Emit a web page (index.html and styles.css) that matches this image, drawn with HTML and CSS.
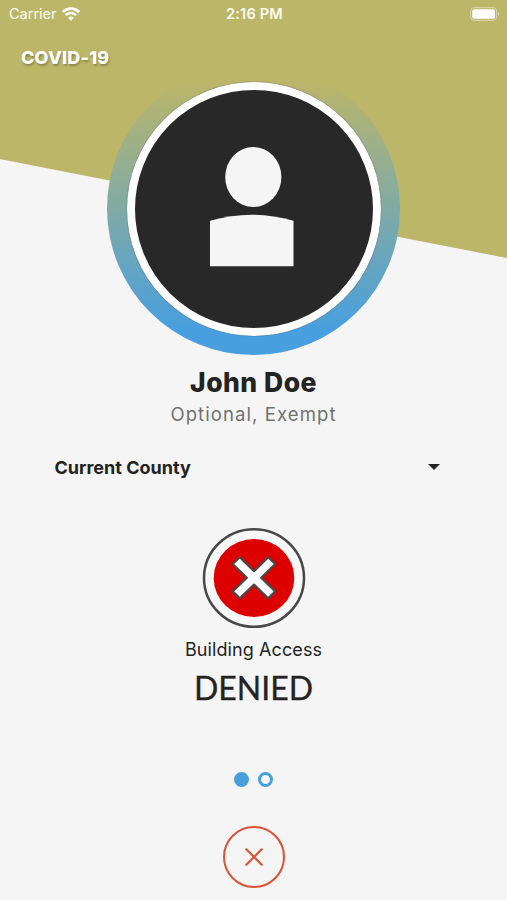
FILE: index.html
```html
<!DOCTYPE html>
<html lang="en">
  <head>
    <meta charset="UTF-8" />
    <meta name="viewport" content="width=device-width, initial-scale=1.0" />
    <title>COVID-19</title>
    <link rel="stylesheet" href="styles.css">
  </head>
  <body>
    <main class="screen">
      <div class="status-bar">
        <div class="carrier">
          <span>Carrier</span>
          <svg width="18" height="14" viewBox="0 0 18 14" fill="none" stroke="#fff" stroke-width="2.6">
            <path d="M0.8 5a11.6 11.6 0 0 1 16.4 0" />
            <path d="M3.7 8.2a7.5 7.5 0 0 1 10.6 0" />
            <path d="M9 13.8l-2.8-2.9a4 4 0 0 1 5.6 0z" fill="#fff" stroke="none" />
          </svg>
        </div>
        <span class="time">2:16 PM</span>
        <div class="battery">
          <svg width="30" height="14" viewBox="0 0 30 14">
            <rect x="0.6" y="0.6" width="26" height="12.8" rx="3.8" fill="none" stroke="#fff" stroke-opacity="0.4" stroke-width="1.1" />
            <rect x="2.2" y="2.2" width="22.8" height="9.6" rx="2.3" fill="#fff" />
            <path d="M28 4.8a2.6 2.6 0 0 1 0 4.4z" fill="#fff" fill-opacity="0.5" />
          </svg>
        </div>
      </div>
      <h1 class="title"><span>COVID-19</span></h1>

      <div class="avatar">
        <div class="photo">
          <svg width="86" height="122" viewBox="0 0 86 122" fill="#f5f5f5">
            <ellipse cx="44.3" cy="31" rx="28.1" ry="30" />
            <path d="M1 74.7Q43 62.7 84.5 74.7V120.3H1z" />
          </svg>
        </div>
      </div>

      <h2 class="name"><span>John Doe</span></h2>
      <p class="role"><span>Optional, Exempt</span></p>

      <div class="county">
        <span>Current County</span>
        <i class="caret"></i>
      </div>

      <svg class="denied-icon" width="104" height="102" viewBox="0 0 104 102">
        <ellipse cx="52" cy="51" rx="50" ry="48.8" fill="#f8f8f8" stroke="#484848" stroke-width="2.5" />
        <ellipse cx="52" cy="51" rx="40.3" ry="39" fill="#dc0000" />
        <path d="M37.8 30.3L52 44.2L66.2 30.3L73.3 37L59.2 50.7L73.3 64.4L66.2 71.4L52 57.6L37.8 71.4L30.7 64.4L44.8 50.7L30.7 37z" fill="#fff" stroke="#484848" stroke-width="2.2" stroke-linejoin="round" />
      </svg>
      <p class="access"><span>Building Access</span></p>
      <p class="result"><span>DENIED</span></p>

      <div class="dots">
        <span class="dot active"></span>
        <span class="dot"></span>
      </div>

      <button class="close" aria-label="Close">
        <svg width="18" height="18" viewBox="0 0 18 18" stroke="#dc5134" stroke-width="2.2" stroke-linecap="round">
          <path d="M1.3 1.3l15.4 15.4M16.7 1.3L1.3 16.7" />
        </svg>
      </button>
    </main>
  </body>
</html>
```
FILE: styles.css
```css
* {
  box-sizing: border-box;
}
body {
  margin: 0;
  background-color: #f5f5f5;
  font-family: Inter, sans-serif;
  color: #232323;
}
h1,
h2,
p {
  margin: 0;
}
.screen {
  display: flex;
  flex-direction: column;
  align-items: center;
  width: 507px;
  height: 900px;
  /* slanted header */
  background: linear-gradient(191.05deg, #bcb668 0 252.8px, #f5f5f5 253.8px);
}
.status-bar {
  display: grid;
  grid-template-columns: 1fr auto 1fr;
  align-items: center;
  width: 100%;
  height: 27px;
  padding: 0 7px 0 9px;
  font-size: 14.5px;
  color: #fffdf0;
}
.carrier {
  display: flex;
  align-items: center;
  gap: 5px;
}
.time {
  font-weight: 600;
  letter-spacing: 0.2px;
}
.battery {
  display: flex;
  justify-content: flex-end;
}
.title {
  width: 100%;
  height: 35px;
  padding-left: 21px;
  font-size: 18px;
  font-weight: 800;
  line-height: 61px;
  letter-spacing: 0.2px;
  color: #fff;
  text-shadow: 1px 2px 2px rgba(0, 0, 0, 0.25);
}
.avatar {
  display: flex;
  justify-content: center;
  flex-shrink: 0;
  width: 293px;
  height: 293px;
  padding-top: 19.5px;
  border-radius: 50%;
  background: linear-gradient(#bcb668 6%, #479fe0 92%);
}
.photo {
  display: flex;
  justify-content: center;
  width: 254px;
  height: 254px;
  padding: 56.5px 3px 0 0;
  border: 8px solid #fff;
  border-radius: 50%;
  background-color: #282828;
  box-shadow: 0 0 1px rgba(40, 40, 40, 0.9);
}
.name {
  margin-top: 9px;
  font-size: 26.5px;
  font-weight: 800;
  line-height: 36px;
  letter-spacing: 0.5px;
}
.role {
  font-size: 18.5px;
  line-height: 28px;
  letter-spacing: 1.1px;
  color: #707070;
}
.county {
  display: flex;
  justify-content: space-between;
  align-items: center;
  width: 398px;
  height: 30px;
  margin-top: 24px;
  padding-right: 13px;
  font-size: 18px;
  font-weight: 700;
}
.caret {
  border: 6px solid transparent;
  border-top-color: #232323;
  border-bottom: 0;
}
.denied-icon {
  flex-shrink: 0;
  margin-top: 45px;
}
.access {
  margin-top: 8px;
  font-size: 18px;
  line-height: 26px;
  letter-spacing: 0.1px;
}
.result {
  margin-top: 5px;
  font-family: Lato, sans-serif;
  font-size: 32px;
  line-height: 40px;
  -webkit-text-stroke: 0.3px #232323;
}
.dots {
  display: flex;
  gap: 9px;
  margin-top: 64px;
}
.dot {
  width: 15px;
  height: 15px;
  border: 3px solid #479fdc;
  border-radius: 50%;
}
.active {
  background-color: #479fdc;
}
.close {
  display: flex;
  justify-content: center;
  align-items: center;
  flex-shrink: 0;
  width: 62px;
  height: 62px;
  margin-top: 39px;
  padding: 0;
  border: 2px solid #dc5134;
  border-radius: 50%;
  background: none;
}
```
